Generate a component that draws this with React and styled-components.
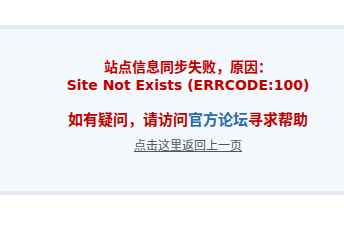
import React from "react";
import styled, { createGlobalStyle } from "styled-components";

const Global = createGlobalStyle`
  html, body { margin: 0; padding: 0; background: #fff; }
  body { font-family: "Liberation Sans", "Noto Sans CJK SC", sans-serif; }
`;

const Page = styled.div`
  padding-top: 25px;
`;

const Box = styled.div`
  background: #f2f8fc;
  border-top: 4px solid #e3ecf4;
  border-bottom: 4px solid #e3ecf4;
  padding: 28px 0 37px 32px;
  text-align: center;
`;

const ErrorText = styled.p`
  margin: 0;
  color: #c00000;
  font-weight: bold;
  font-size: 14px;
  line-height: 19px;
  font-family: "Noto Sans CJK SC", sans-serif;
`;

const Code = styled.span`
  display: block;
  font-family: "DejaVu Sans", Verdana, sans-serif;
  font-size: 14px;
`;

const Help = styled.p`
  margin: 14px 0 0;
  color: #c00000;
  font-weight: bold;
  font-size: 15px;
  line-height: 20px;
  font-family: "Noto Sans CJK SC", sans-serif;
`;

const Forum = styled.a`
  color: #2d6aa8;
  text-decoration: none;
`;

const Back = styled.a`
  display: inline-block;
  margin-top: 7px;
  color: #555;
  font-size: 12px;
  line-height: 18px;
  font-family: "Noto Sans CJK SC", sans-serif;
  text-decoration: underline;
`;

export default function App() {
  return (
    <Page>
      <Global />
      <Box>
        <ErrorText>
          站点信息同步失败，原因：
          <Code>Site Not Exists (ERRCODE:100)</Code>
        </ErrorText>
        <Help>
          如有疑问，请访问<Forum href="#">官方论坛</Forum>寻求帮助
        </Help>
        <Back href="#">点击这里返回上一页</Back>
      </Box>
    </Page>
  );
}
